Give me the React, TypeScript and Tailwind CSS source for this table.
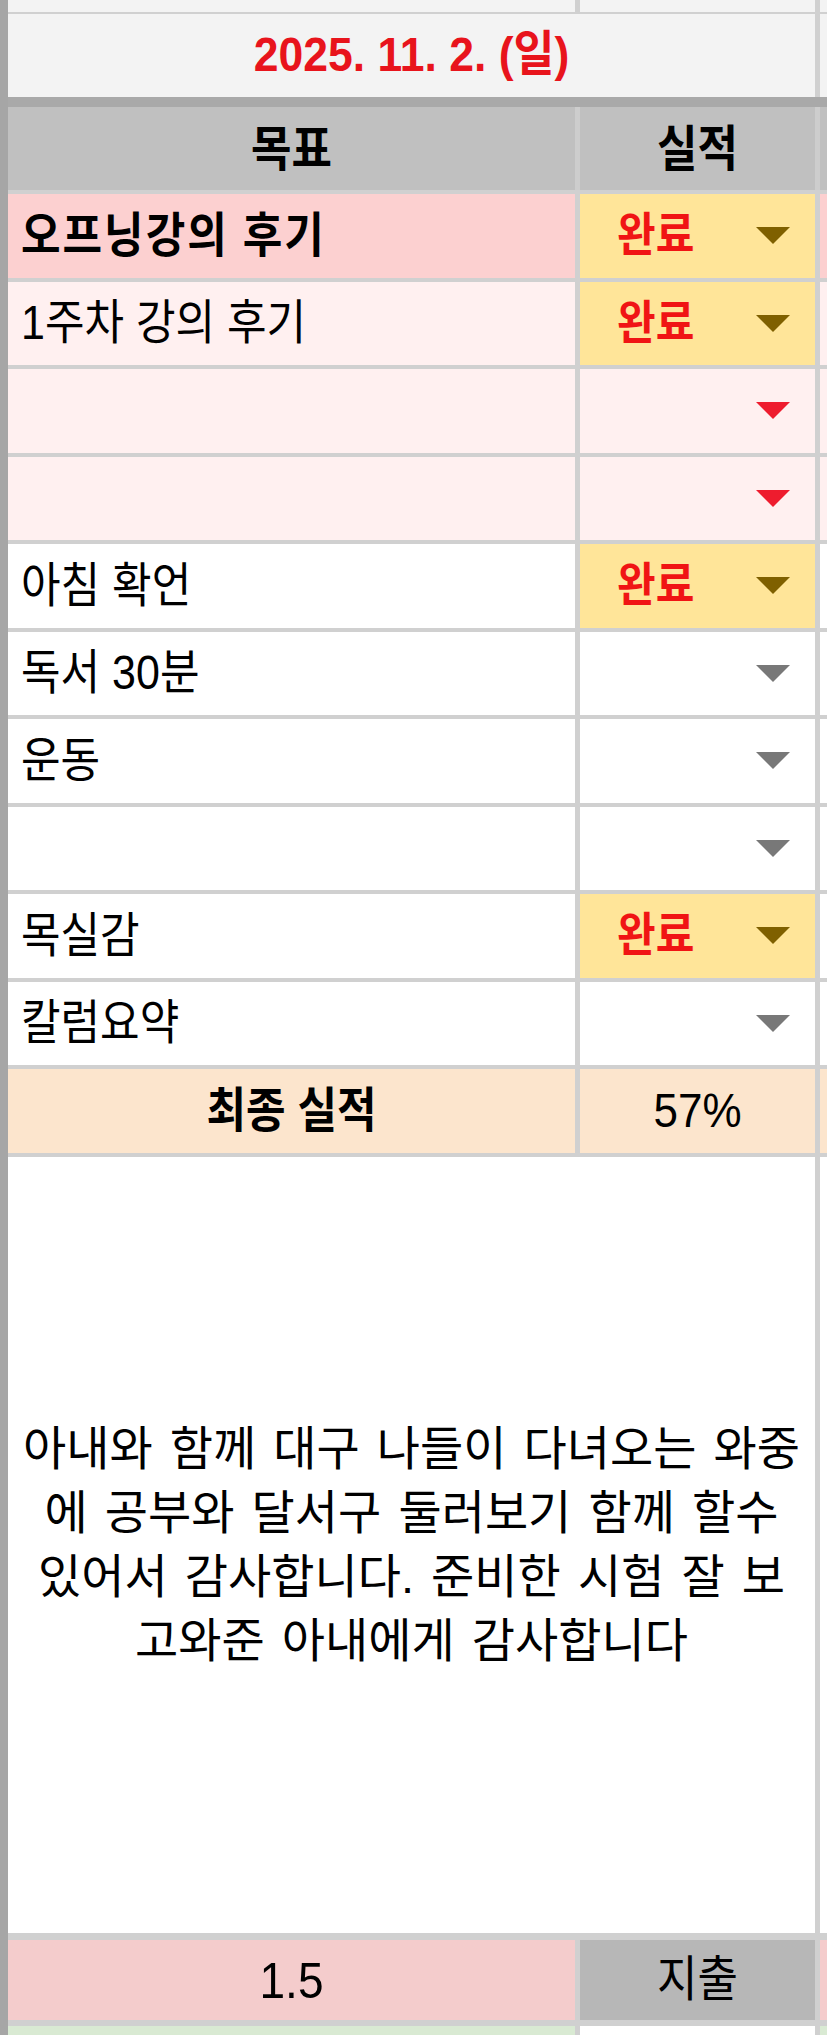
import React from "react";

type Tri = "olive" | "red" | "gray";

const triColor: Record<Tri, string> = {
  olive: "#7f6000",
  red: "#ee1c2e",
  gray: "#787878",
};

function Triangle({ kind }: { kind: Tri }) {
  return (
    <svg width="34" height="17" viewBox="0 0 34 17" className="shrink-0">
      <polygon points="0,0 34,0 17,17" fill={triColor[kind]} />
    </svg>
  );
}

type Row = {
  label: string;
  bold?: boolean;
  bg: string;
  done: boolean;
  tri: Tri;
  side: string;
};

const rows: Row[] = [
  { label: "오프닝강의 후기", bold: true, bg: "bg-[#fcd0d0]", done: true, tri: "olive", side: "bg-[#fcd0d0]" },
  { label: "1주차 강의 후기", bg: "bg-[#fff0f0]", done: true, tri: "olive", side: "bg-[#fff0f0]" },
  { label: "", bg: "bg-[#fff0f0]", done: false, tri: "red", side: "bg-[#fff0f0]" },
  { label: "", bg: "bg-[#fff0f0]", done: false, tri: "red", side: "bg-[#fff0f0]" },
  { label: "아침 확언", bg: "bg-white", done: true, tri: "olive", side: "bg-white" },
  { label: "독서 30분", bg: "bg-white", done: false, tri: "gray", side: "bg-white" },
  { label: "운동", bg: "bg-white", done: false, tri: "gray", side: "bg-white" },
  { label: "", bg: "bg-white", done: false, tri: "gray", side: "bg-white" },
  { label: "목실감", bg: "bg-white", done: true, tri: "olive", side: "bg-white" },
  { label: "칼럼요약", bg: "bg-white", done: false, tri: "gray", side: "bg-white" },
];

export default function App() {
  return (
    <div className="flex w-[827px] h-[2035px] overflow-hidden bg-white font-['Liberation_Sans','Noto_Sans_CJK_KR',sans-serif] text-black">
      <div className="w-[8px] shrink-0 bg-[#a6a6a6]" />
      <div className="flex w-[819px] flex-col bg-[#d0d0d0]">
        {/* top strip */}
        <div className="flex h-[12px] gap-x-[5px]">
          <div className="w-[567px] bg-[#f3f3f3]" />
          <div className="w-[235px] bg-[#f3f3f3]" />
          <div className="flex-1 bg-[#f3f3f3]" />
        </div>
        {/* date */}
        <div className="mt-[2px] flex h-[83px] gap-x-[5px]">
          <div className="flex w-[807px] items-center justify-center bg-[#f3f3f3]">
            <span className="inline-block scale-y-[1.1] text-[44.5px] font-bold text-[#e8141c]">
              2025. 11. 2. (일)
            </span>
          </div>
          <div className="flex-1 bg-[#f3f3f3]" />
        </div>
        {/* dark band */}
        <div className="h-[10px] bg-[#a9a9a9]" />
        {/* header */}
        <div className="flex h-[83px] gap-x-[5px] bg-[#cdcdcd]">
          <div className="flex w-[567px] items-center justify-center bg-[#c0c0c0]">
            <span className="inline-block scale-y-[1.1] text-[44px] font-bold">목표</span>
          </div>
          <div className="flex w-[235px] items-center justify-center bg-[#c0c0c0]">
            <span className="inline-block scale-y-[1.1] text-[44px] font-bold">실적</span>
          </div>
          <div className="flex-1 bg-[#c0c0c0]" />
        </div>
        {/* task rows */}
        {rows.map((r, i) => (
          <div key={i} className="mt-[4px] flex h-[83.5px] gap-x-[5px]">
            <div className={`flex w-[567px] items-center pl-[13px] ${r.bg}`}>
              {r.label && (
                <span
                  className={`inline-block scale-y-[1.1] text-[43px] ${
                    r.bold ? "font-bold tracking-[2px]" : ""
                  }`}
                >
                  {r.label}
                </span>
              )}
            </div>
            <div
              className={`flex w-[235px] items-center pl-[37px] pr-[25px] ${
                r.done ? "justify-between bg-[#ffe599]" : `justify-end ${r.bg}`
              }`}
            >
              {r.done && (
                <span className="inline-block scale-y-[1.1] text-[42px] font-bold text-[#f01414]">
                  완료
                </span>
              )}
              <Triangle kind={r.tri} />
            </div>
            <div className={`flex-1 ${r.side}`} />
          </div>
        ))}
        {/* final result */}
        <div className="mt-[4px] flex h-[83.5px] gap-x-[5px]">
          <div className="flex w-[567px] items-center justify-center bg-[#fce5cd]">
            <span className="inline-block scale-y-[1.1] text-[43px] font-bold">최종 실적</span>
          </div>
          <div className="flex w-[235px] items-center justify-center bg-[#fce5cd]">
            <span className="inline-block scale-y-[1.1] text-[44px]">57%</span>
          </div>
          <div className="flex-1 bg-[#fce5cd]" />
        </div>
        {/* gratitude text */}
        <div className="mt-[4px] flex h-[776.5px] gap-x-[5px]">
          <div className="flex w-[807px] items-center justify-center bg-white">
            <p className="text-center text-[47px] leading-[64px] [word-spacing:4px]">
              아내와 함께 대구 나들이 다녀오는 와중
              <br />
              에 공부와 달서구 둘러보기 함께 할수
              <br />
              있어서 감사합니다. 준비한 시험 잘 보
              <br />
              고와준 아내에게 감사합니다
            </p>
          </div>
          <div className="flex-1 bg-white" />
        </div>
        {/* bottom row */}
        <div className="mt-[7px] flex h-[80px] gap-x-[5px]">
          <div className="flex w-[567px] items-center justify-center bg-[#f4cccc]">
            <span className="inline-block scale-y-[1.1] text-[46px]">1.5</span>
          </div>
          <div className="flex w-[235px] items-center justify-center bg-[#b7b7b7]">
            <span className="inline-block scale-y-[1.1] text-[44px]">지출</span>
          </div>
          <div className="flex-1 bg-[#f4cccc]" />
        </div>
        <div className="mt-[6px] flex flex-1 gap-x-[5px]">
          <div className="w-[567px] bg-[#d9ead3]" />
          <div className="w-[235px] bg-white" />
          <div className="flex-1 bg-[#d9ead3]" />
        </div>
      </div>
    </div>
  );
}
